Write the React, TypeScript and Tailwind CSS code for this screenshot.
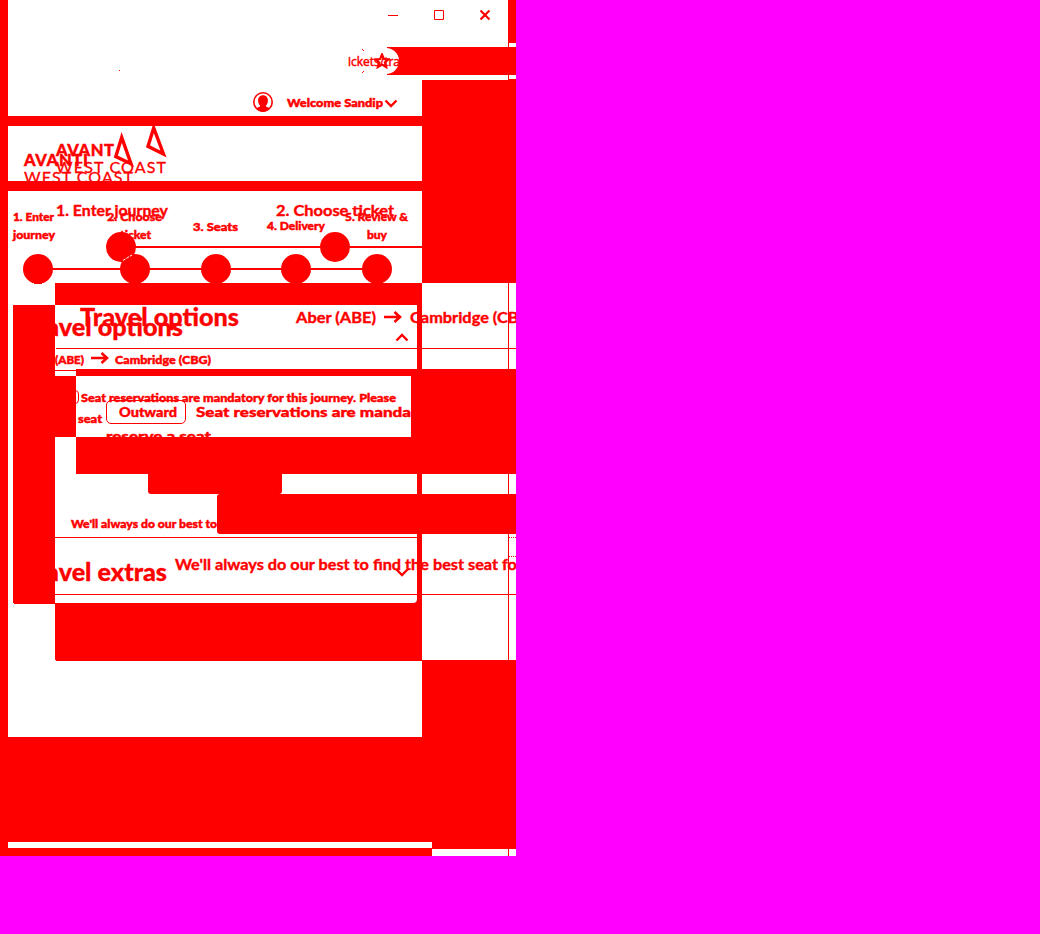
import { useLayoutEffect, useRef } from "react";
import type { ReactNode } from "react";

const small = "mt-[1.500px] text-[12px] font-black [-webkit-text-stroke:0.500px_#f00]";
const medium = "mt-px text-[16px] font-bold [-webkit-text-stroke:0.400px_#f00]";
const notice = "mt-px text-[14px] font-black [-webkit-text-stroke:0.400px_#f00]";
const heading = "mt-[2px] text-[24px] font-black [-webkit-text-stroke:0.300px_#f00]";

/** One line of text that fills the given width, by its tracking or by the width of its glyphs. */
function Line({ w, track, className, children }: { w: number; track?: boolean; className: string; children: string }) {
  const ref = useRef<HTMLSpanElement>(null);
  useLayoutEffect(() => {
    const el = ref.current;
    if (!el) return;
    el.style.letterSpacing = "0px";
    el.style.transform = "none";
    const natural = el.getBoundingClientRect().width;
    if (track) {
      el.style.letterSpacing = `${(w - natural) / Math.max(1, children.length - 1)}px`;
    } else {
      el.style.transform = `scaleX(${w / natural})`;
    }
  }, [w, track, children]);
  return (
    <span ref={ref} className={`absolute origin-left whitespace-pre leading-none ${className}`}>
      {children}
    </span>
  );
}

function Row({ className, children }: { className: string; children?: ReactNode }) {
  return <div className={`relative flex shrink-0 overflow-hidden ${className}`}>{children}</div>;
}

/** Right-hand margin: white, with the thin rule of the page's scroll area. */
function Margin() {
  return (
    <>
      <div className="w-[86px] bg-white" />
      <div className="w-px" />
      <div className="w-[7px] bg-white" />
    </>
  );
}

function Chevron({ up, className }: { up?: boolean; className: string }) {
  return (
    <svg viewBox="0 0 14 9" className={`absolute h-[9px] w-[14px] ${className}`} fill="none" stroke="#f00" strokeWidth="2.400">
      <path d={up ? "M1.5 7.5 7 2l5.5 5.5" : "M1.5 1.5 7 7l5.5-5.5"} />
    </svg>
  );
}

function Arrow({ className }: { className: string }) {
  return (
    <svg viewBox="0 0 18 12" className={`absolute h-3 w-[18px] ${className}`} fill="none" stroke="#f00" strokeWidth="2.600">
      <path d="M0 6h16M10.500 1l5.500 5-5.500 5" />
    </svg>
  );
}

function Dot({ className }: { className: string }) {
  return <div className={`absolute size-[30px] rounded-full bg-[#f00] ${className}`} />;
}

export default function App() {
  return (
    <div className="h-[934px] w-[1040px] overflow-hidden bg-[#f0f] font-['Lato',sans-serif] text-[#f00]">
      <main className="flex h-[856px] w-[516px] flex-col overflow-hidden bg-[#f00] pl-2">
        {/* Window bar and account line */}
        <Row className="h-[80px]">
          <div className="w-[500px] bg-white" />
          <div className="flex w-2 flex-col pl-px pt-[43px]">
            <div className="h-1 bg-white" />
            <div className="h-7" />
            <div className="h-1 bg-white" />
          </div>
          <div className="absolute left-[379px] top-[47px] h-7 w-[129px] bg-[#f00]" />
          <div className="absolute left-[363px] top-[48px] h-[26px] w-[28px] rounded-full bg-white" />
          <svg viewBox="0 0 102 12" className="absolute left-[380px] top-[10px] h-3 w-[102px]" fill="none" stroke="#f00">
            <path d="M0 5.500h10M46.500.5h9v9h-9z" />
            <path d="m92.500.500 9 9m0-9-9 9" strokeWidth="2.200" />
          </svg>
          <div className="absolute left-[111px] top-[70px] size-px bg-[#f00]" />
          <svg viewBox="0 0 4 24" className="absolute left-[353px] top-[49px] h-6 w-1" fill="#f00">
            <path d="M1 0h1v1H1zM2 1h1v1H2zM2 22h1v1H2zM1 23h1v1H1z" />
          </svg>
          <Line w={52} className="left-[340px] top-[54.500px] font-['Open_Sans'] text-[13px] font-medium [-webkit-text-stroke:0.500px_#f00]">ickets/tra</Line>
          <svg viewBox="0 0 16 16" className="absolute left-[366px] top-[53px] size-4" fill="none" stroke="#f00" strokeWidth="2.200">
            <path d="m8 1.500 1.800 4.500 4.700.3-3.600 3 1.200 4.700L8 11.500 3.900 14l1.200-4.700-3.600-3L6.200 6z" />
          </svg>
        </Row>
        <Row className="h-9">
          <div className="w-[414px] bg-white" />
          <svg viewBox="0 0 20 20" className="absolute left-[245px] top-3 size-5">
            <circle cx="10" cy="10" r="9.200" fill="none" stroke="#f00" strokeWidth="1.600" />
            <path d="M10 3.300c3 0 4.900 2.200 4.900 5.200 0 2.500-.9 4-1.900 5.100v.9l4 1.700C15 18.800 12.700 20 10 20s-5-1.200-7-3.800l4-1.700v-.9C6 12.500 5.100 11 5.100 8.500c0-3 1.900-5.200 4.900-5.200z" fill="#f00" />
          </svg>
          <Line w={96} className={`left-[279px] top-[15px] ${small}`}>Welcome Sandip</Line>
          <Chevron className="left-[376px] top-[19px]" />
        </Row>

        {/* Brand */}
        <Row className="mt-[10px] h-[55px]">
          <div className="w-[414px] bg-white" />
          <Line track w={64} className="left-4 top-[26px] text-[16.500px] font-black [-webkit-text-stroke:0.400px_#f00]">AVANTI</Line>
          <Line track w={109} className="left-4 top-[43px] text-[16px] [-webkit-text-stroke:0.300px_#f00]">WEST COAST</Line>
          <Line track w={58} className="left-[48px] top-4 text-[16.500px] font-black [-webkit-text-stroke:0.400px_#f00]">AVANT</Line>
          <Line track w={110} className="left-[48px] top-[33px] text-[16px] [-webkit-text-stroke:0.300px_#f00]">WEST COAST</Line>
          <svg viewBox="0 0 56 42" className="absolute left-[104px] top-0 h-[42px] w-14" fill="none" stroke="#f00" strokeWidth="3.400">
            <path d="M9.700 11.500 3.800 30.500l15.200 7.200zM41.700 2l-5.700 18.300 15.500 7.700z" />
          </svg>
        </Row>

        {/* Booking steps */}
        <Row className="mt-[10px] h-[92px]">
          <div className="w-[414px] bg-white" />
          <div className="absolute left-[30px] top-[77px] h-0.5 w-[339px] bg-[#f00]" />
          <div className="absolute left-[113px] top-[55px] h-0.5 w-[301px] bg-[#f00]" />
          <Dot className="left-[15px] top-[63px]" />
          <Dot className="left-[112px] top-[63px]" />
          <Dot className="left-[193px] top-[63px]" />
          <Dot className="left-[273px] top-[63px]" />
          <Dot className="left-[354px] top-[63px]" />
          <Dot className="left-[98px] top-[41px]" />
          <Dot className="left-[312px] top-[41px]" />
          <svg viewBox="0 0 12 7" className="absolute left-[114px] top-[63px] h-[7px] w-3" fill="none" stroke="#fff">
            <path d="M1 6.500 5 4l5-3" strokeDasharray="3 1" />
          </svg>
          <Line w={112} className={`left-[48px] top-[10px] ${medium}`}>1. Enter journey</Line>
          <Line w={118} className={`left-[268px] top-[10px] ${medium}`}>2. Choose ticket</Line>
          <Line w={41} className={`left-[5px] top-[18px] ${small}`}>1. Enter</Line>
          <Line w={42} className={`left-[5px] top-[36px] ${small}`}>journey</Line>
          <Line w={55} className={`left-[99px] top-[18px] ${small}`}>2. Choose</Line>
          <Line w={31} className={`left-[112px] top-[36px] ${small}`}>ticket</Line>
          <Line w={45} className={`left-[185px] top-[28px] ${small}`}>3. Seats</Line>
          <Line w={58} className={`left-[259px] top-[27.500px] ${small}`}>4. Delivery</Line>
          <Line w={63} className={`left-[337px] top-[18px] ${small}`}>5. Review &amp;</Line>
          <Line w={20} className={`left-[359px] top-[36px] ${small}`}>buy</Line>
        </Row>
        <Row className="h-[22px]">
          <div className="w-[47px] bg-white" />
          <div className="w-[367px]" />
          <Margin />
          <div className="absolute left-[26px] top-0 h-px w-2 bg-[#f00]" />
        </Row>

        {/* Travel options */}
        <Row className="h-16">
          <div className="w-[5px] bg-white" />
          <div className="w-[42px]" />
          <div className="relative w-[362px] overflow-hidden bg-white">
            <Line w={159} className={`left-[25px] top-[-2px] ${heading}`}>Travel options</Line>
            <Line w={159} className={`left-[-31px] top-[8px] ${heading}`}>Travel options</Line>
            <Line w={29} className={`left-0 top-[47px] ${small}`}>(ABE)</Line>
            <Arrow className="left-[36px] top-[47px]" />
            <Line w={96} className={`left-[60px] top-[47px] ${small}`}>Cambridge (CBG)</Line>
            <Chevron up className="left-[340px] top-[28px]" />
          </div>
          <div className="w-[5px]" />
          <Margin />
          <div className="absolute left-[48px] top-[43px] h-px w-[460px] bg-[#f00]" />
          <Line w={80} className={`left-[288px] top-[2.500px] ${medium}`}>Aber (ABE)</Line>
          <Arrow className="left-[376px] top-[6px]" />
          <Line w={125} className={`left-[402px] top-[2.500px] ${medium}`}>Cambridge (CBG)</Line>
        </Row>

        {/* Reservation notice */}
        <Row className="h-[7px]">
          <div className="w-[5px] bg-white" />
          <div className="w-[42px]" />
          <div className="flex w-[21px] flex-col bg-white pt-px">
            <div className="h-px bg-[#f00]" />
          </div>
        </Row>
        <Row className="h-[61px]">
          <div className="w-[5px] bg-white" />
          <div className="w-[63px]" />
          <div className="relative w-[335px] overflow-hidden bg-white">
            <div className="absolute -left-3 top-[14px] h-[14px] w-[15px] rounded border border-[#f00]" />
            <Line w={315} className={`left-[5px] top-[14px] ${small}`}>Seat reservations are mandatory for this journey. Please</Line>
            <Line w={24} className={`left-0.5 top-[35px] ${small}`}>seat</Line>
            <div className="absolute left-[30px] top-[24px] h-6 w-20 rounded-[5px] border border-[#f00]" />
            <Line w={58} className={`left-[43px] top-[28px] ${notice}`}>Outward</Line>
            <Line w={215} className={`left-[120px] top-[28px] ${notice}`}>Seat reservations are manda</Line>
            <Line w={105} className={`left-[30px] top-[52px] ${notice}`}>reserve a seat</Line>
          </div>
        </Row>
        <Row className="h-[37px]">
          <div className="w-[5px] bg-white" />
          <div className="w-[42px]" />
          <div className="w-[21px] bg-white" />
        </Row>
        <Row className="h-5">
          <div className="w-[5px] bg-white" />
          <div className="w-[42px]" />
          <div className="w-[362px] bg-white px-[93px]">
            <div className="h-5 w-[134px] rounded-b-[3px] bg-[#f00]" />
          </div>
          <div className="w-[5px]" />
          <Margin />
        </Row>
        <Row className="h-10">
          <div className="w-[5px] bg-white" />
          <div className="w-[42px]" />
          <div className="relative w-[461px] overflow-hidden bg-white pl-[162px]">
            <Line w={146} className={`left-4 top-[22px] ${small}`}>We'll always do our best to</Line>
            <div className="relative h-10 rounded-l-[3px] bg-[#f00]" />
          </div>
        </Row>

        {/* Travel extras */}
        <Row className="h-[69px]">
          <div className="w-[5px] bg-white" />
          <div className="w-[42px]" />
          <div className="relative w-[362px] overflow-hidden rounded-br bg-white">
            <div className="mt-[3px] h-px bg-[#f00]" />
            <Line w={143} className={`left-[-31px] top-6 ${heading}`}>Travel extras</Line>
            <Chevron className="left-[340px] top-[34px]" />
          </div>
          <div className="w-[5px]" />
          <Margin />
          <div className="absolute left-[47px] top-[60px] h-px w-[461px] bg-[#f00]" />
          <div className="absolute right-0 top-[3px] w-[7px] border-t border-dotted border-[#f00]" />
          <div className="absolute right-0 top-[22px] w-[7px] border-t border-dotted border-[#f00]" />
          <Line w={348} className={`left-[167px] top-[21px] ${medium}`}>We'll always do our best to find the best seat for</Line>
        </Row>
        <Row className="h-[57px]">
          <div className="w-[47px] bg-white" />
          <div className="w-[367px]" />
          <Margin />
          <div className="absolute left-[6px] top-0 h-px w-[41px] bg-[#f00]" />
        </Row>

        {/* Page foot */}
        <Row className="h-[77px]">
          <div className="w-[414px] bg-white" />
          <div className="absolute left-[48px] top-0 h-px w-[366px] bg-[#f00]" />
        </Row>
        <Row className="mt-[105px] h-1.5">
          <div className="w-[424px] bg-white" />
        </Row>
        <Row className="mt-px h-[7px]">
          <div className="w-[424px]" />
          <div className="w-[76px] bg-white" />
          <div className="w-px" />
          <div className="w-[7px] bg-white" />
        </Row>
      </main>
    </div>
  );
}
